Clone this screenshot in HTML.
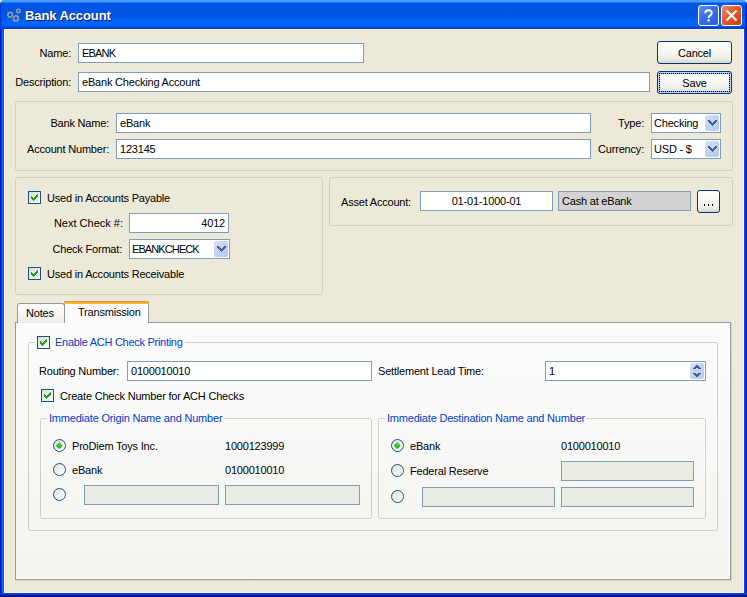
<!DOCTYPE html>
<html><head><meta charset="utf-8">
<style>
*{box-sizing:border-box;margin:0;padding:0}
html,body{width:747px;height:597px;overflow:hidden;background:#dfe5ef}
body{position:relative;font-family:"Liberation Sans",sans-serif;font-size:11px;color:#000}
.a{position:absolute}
.t{position:absolute;white-space:nowrap;line-height:13px;letter-spacing:-0.2px}
.r{text-align:right}
.win{position:absolute;left:0;top:0;width:747px;height:597px;border-radius:5px 5px 0 0;overflow:hidden;
 background:linear-gradient(to right,#0019cf 0,#0019cf 1px,#0831d9 1px,#0831d9 2px,#166aee 2px,#166aee 3px,#0855dd 3px,#0855dd 4px,transparent 4px,transparent 744px,#0041f0 744px,#0041f0 745px,#0036d4 745px,#0036d4 746px,#00209e 746px)}
.title{position:absolute;left:0;top:0;width:747px;height:29px;
 background:linear-gradient(to bottom,#4a9bff 0,#4a9bff 2px,#1a78fa 2px,#1a78fa 3px,#0059e8 3px,#0054e3 8px,#0056e8 17px,#0063f8 20px,#0066ff 24px,#0058f0 26px,#0050e4 27px,#003cc4 28px,#003cc4 29px)}
.client{position:absolute;left:4px;top:29px;width:740px;height:564px;background:#ece9d8;border:1px solid #fff5dc}
.bottom{position:absolute;left:0;top:593px;width:747px;height:4px;background:linear-gradient(to bottom,#0040f0 0,#0040f0 1px,#0030d0 1px,#0030d0 2px,#001a98 2px,#00138a 4px)}
.in{position:absolute;background:#fff;border:1px solid #7f9db9}
.in .t{left:3px;top:3px}
.dis{background:#ebebe4}
.ro{background:#d3d3d3}
.btn{position:absolute;border:1px solid #003c74;border-radius:3px;
 background:linear-gradient(to bottom,#fff 0%,#f7f7f4 40%,#f0f0ea 75%,#e3e2da 90%,#d6d0c5 100%)}
.btn .t{left:0;right:0;text-align:center;top:5px!important}
.grp{position:absolute;border:1px solid #d0d0bf;border-radius:2.5px}
.cmb{position:absolute;background:#fff;border:1px solid #7f9db9}
.cmb .t{left:2px;top:3px}
.dd{position:absolute;right:1px;top:1px;width:14px;height:16px;border-radius:2px;
 background:linear-gradient(135deg,#d8e3fc 0%,#c4d3f8 40%,#b4c8f8 100%)}
.dd svg{position:absolute;left:3px;top:5px}
.cb{position:absolute;width:13px;height:13px;border:1px solid #1c5180;background:linear-gradient(135deg,#dcdcd7 0%,#f0f0ec 60%,#fff 100%)}
.cb svg{position:absolute;left:2px;top:2px}
.rb{position:absolute;width:13px;height:13px;border-radius:50%;border:1px solid #1c5180;background:linear-gradient(135deg,#dcdcd7 0%,#f2f2ee 55%,#fff 100%)}
.rb .dot{position:absolute;left:3px;top:3px;width:4.6px;height:4.6px;border-radius:1px;transform:rotate(45deg);background:radial-gradient(circle at 40% 35%,#55d850 0,#2db82b 50%,#1f9e1e 100%)}
.blue{color:#0040d0}
</style></head><body>
<div class="win">
 <div class="title"></div>
 <div class="client"></div>
 <div class="bottom"></div>
 <div class="a" style="left:0;top:4px;width:2px;height:25px;background:linear-gradient(to right,#0a3cd8 0,#0a3cd8 1px,#0848e4 1px)"></div>
 <div class="a" style="left:744px;top:3px;width:3px;height:26px;background:linear-gradient(to right,#0050f8 0,#0050f8 1px,#0038d0 1px,#0038d0 2px,#0020a0 2px)"></div>
</div>

<!-- title icon -->
<svg class="a" style="left:4px;top:5px" width="20" height="20" viewBox="0 0 20 20">
 <g fill="none">
  <circle cx="6.2" cy="9.7" r="2.3" stroke="#7f9cc2" stroke-width="2.2"/>
  <circle cx="14.4" cy="5.9" r="1.8" stroke="#7f9cc2" stroke-width="1.9"/>
  <circle cx="11.9" cy="13.4" r="2.5" stroke="#7f9cc2" stroke-width="2.4"/>
  <circle cx="6.2" cy="9.7" r="3.6" stroke="#1f3f8f" stroke-width="0.9" stroke-dasharray="1.4 1.4"/>
  <circle cx="14.4" cy="5.9" r="2.9" stroke="#1f3f8f" stroke-width="0.9" stroke-dasharray="1.4 1.4"/>
  <circle cx="11.9" cy="13.4" r="3.9" stroke="#1f3f8f" stroke-width="0.9" stroke-dasharray="1.4 1.4"/>
  <circle cx="6.2" cy="9.7" r="1.1" stroke="#2a3f90" stroke-width="0.6"/>
  <circle cx="11.9" cy="13.4" r="1.2" stroke="#2a3f90" stroke-width="0.6"/>
 </g>
</svg>
<div class="t" style="left:26px;top:9px;font-weight:bold;font-size:13px;line-height:16px;color:#0a1870;letter-spacing:-0.1px">Bank Account</div>
<div class="t" style="left:25px;top:8px;font-weight:bold;font-size:13px;line-height:16px;color:#fff;letter-spacing:-0.1px">Bank Account</div>

<!-- help button -->
<div class="a" style="left:698px;top:5px;width:21px;height:21px;border:1px solid #fff;border-radius:3px;background:linear-gradient(135deg,#5f95f6 0%,#3a70ee 40%,#2a5de0 100%)">
 <svg class="a" style="left:0;top:0" width="19" height="19" viewBox="0 0 19 19"><path d="M6.3 7.2 Q6.3 4.3 9.5 4.3 Q12.7 4.3 12.7 7 Q12.7 8.6 11 9.6 Q9.6 10.4 9.6 12" fill="none" stroke="#fff" stroke-width="2"/><rect x="8.5" y="13.3" width="2.2" height="2.2" fill="#fff"/></svg>
</div>
<!-- close button -->
<div class="a" style="left:721px;top:5px;width:21px;height:21px;border:1px solid #fff;border-radius:3px;background:linear-gradient(135deg,#f08a66 0%,#e4582c 45%,#c8400e 100%)">
 <svg class="a" style="left:0;top:0" width="19" height="19" viewBox="0 0 19 19"><path d="M4.5 4.5 L14.5 14.5 M14.5 4.5 L4.5 14.5" stroke="#fff" stroke-width="2.1"/></svg>
</div>

<!-- top row -->
<div class="t r" style="left:0;width:71px;top:47px">Name:</div>
<div class="in" style="left:78px;top:43px;width:286px;height:20px"><div class="t" style="letter-spacing:-0.8px">EBANK</div></div>
<div class="t r" style="left:0;width:71px;top:76px">Description:</div>
<div class="in" style="left:78px;top:72px;width:572px;height:20px"><div class="t">eBank Checking Account</div></div>
<div class="btn" style="left:657px;top:41px;width:75px;height:23px"><div class="t" style="top:4px">Cancel</div></div>
<div class="btn" style="left:657px;top:71px;width:75px;height:23px;box-shadow:inset 0 0 0 1px #c0d2f8, inset 0 0 0 2px #8fb0f0">
 <div class="a" style="left:1px;top:1px;right:1px;bottom:1px;border:1px dotted #000"></div>
 <div class="t" style="top:4px">Save</div></div>

<!-- group 1 -->
<div class="grp" style="left:15px;top:101px;width:718px;height:70px"></div>
<div class="t r" style="left:0;width:109px;top:117px">Bank Name:</div>
<div class="in" style="left:116px;top:113px;width:475px;height:20px"><div class="t">eBank</div></div>
<div class="t r" style="left:0;width:109px;top:143px">Account Number:</div>
<div class="in" style="left:116px;top:139px;width:475px;height:20px"><div class="t">123145</div></div>
<div class="t r" style="left:500px;width:144px;top:117px">Type:</div>
<div class="cmb" style="left:651px;top:113px;width:70px;height:20px"><div class="t">Checking</div><div class="dd"><svg width="9" height="6" viewBox="0 0 9 6" shape-rendering="crispEdges" fill="#4d6185"><path d="M0 0h2v1h-2zM7 0h2v1h-2zM0 1h3v1h-3zM6 1h3v1h-3zM1 2h3v1h-3zM5 2h3v1h-3zM2 3h5v1h-5zM3 4h3v1h-3zM4 5h1v1h-1z"/></svg></div></div>
<div class="t r" style="left:500px;width:144px;top:143px">Currency:</div>
<div class="cmb" style="left:651px;top:139px;width:70px;height:20px"><div class="t">USD - $</div><div class="dd"><svg width="9" height="6" viewBox="0 0 9 6" shape-rendering="crispEdges" fill="#4d6185"><path d="M0 0h2v1h-2zM7 0h2v1h-2zM0 1h3v1h-3zM6 1h3v1h-3zM1 2h3v1h-3zM5 2h3v1h-3zM2 3h5v1h-5zM3 4h3v1h-3zM4 5h1v1h-1z"/></svg></div></div>

<!-- group 2 -->
<div class="grp" style="left:15px;top:177px;width:308px;height:118px"></div>
<div class="cb" style="left:28px;top:191px"><svg width="7" height="7" viewBox="0 0 7 7" shape-rendering="crispEdges" fill="#21a121"><path d="M6 0h1v1h-1zM5 1h2v1h-2zM0 2h1v1h-1zM4 2h3v1h-3zM0 3h2v1h-2zM3 3h3v1h-3zM0 4h5v1h-5zM1 5h3v1h-3zM2 6h1v1h-1z"/></svg></div>
<div class="t" style="left:47px;top:192px">Used in Accounts Payable</div>
<div class="t r" style="left:0;width:123px;top:217px;letter-spacing:0">Next Check #:</div>
<div class="in" style="left:129px;top:213px;width:100px;height:20px"><div class="t" style="left:auto;right:3px">4012</div></div>
<div class="t r" style="left:0;width:122px;top:243px">Check Format:</div>
<div class="cmb" style="left:129px;top:239px;width:101px;height:20px"><div class="t" style="letter-spacing:-0.9px">EBANKCHECK</div><div class="dd"><svg width="9" height="6" viewBox="0 0 9 6" shape-rendering="crispEdges" fill="#4d6185"><path d="M0 0h2v1h-2zM7 0h2v1h-2zM0 1h3v1h-3zM6 1h3v1h-3zM1 2h3v1h-3zM5 2h3v1h-3zM2 3h5v1h-5zM3 4h3v1h-3zM4 5h1v1h-1z"/></svg></div></div>
<div class="cb" style="left:28px;top:267px"><svg width="7" height="7" viewBox="0 0 7 7" shape-rendering="crispEdges" fill="#21a121"><path d="M6 0h1v1h-1zM5 1h2v1h-2zM0 2h1v1h-1zM4 2h3v1h-3zM0 3h2v1h-2zM3 3h3v1h-3zM0 4h5v1h-5zM1 5h3v1h-3zM2 6h1v1h-1z"/></svg></div>
<div class="t" style="left:47px;top:268px">Used in Accounts Receivable</div>

<!-- group 3 -->
<div class="grp" style="left:329px;top:177px;width:404px;height:49px"></div>
<div class="t" style="left:341px;top:196px">Asset Account:</div>
<div class="in" style="left:420px;top:191px;width:133px;height:20px"><div class="t" style="left:0;right:0;text-align:center">01-01-1000-01</div></div>
<div class="in ro" style="left:558px;top:191px;width:133px;height:20px"><div class="t">Cash at eBank</div></div>
<div class="btn" style="left:697px;top:190px;width:23px;height:23px"><div class="a" style="left:6px;top:13px;width:1px;height:2px;background:#000"></div><div class="a" style="left:10px;top:13px;width:1px;height:2px;background:#000"></div><div class="a" style="left:14px;top:13px;width:1px;height:2px;background:#000"></div></div>

<!-- tabs -->
<div class="a" style="left:15px;top:322px;width:716px;height:258px;border:1px solid #919b9c;background:linear-gradient(to bottom,#fcfcfe 0%,#f4f3ee 100%);box-shadow:1px 1px 0 #d8d5c6, inset -1px -1px 0 #fff"></div>
<div class="a" style="left:17px;top:303px;width:48px;height:20px;border:1px solid #919b9c;border-bottom:none;border-radius:3px 3px 0 0;background:linear-gradient(to bottom,#fff 0%,#f8f8f6 40%,#ecebe5 100%)"></div>
<div class="t" style="left:26px;top:307px">Notes</div>
<div class="a" style="left:64px;top:301px;width:85px;height:22px;border-left:1px solid #919b9c;border-right:1px solid #919b9c;background:#fcfcfe"></div>
<div class="a" style="left:64px;top:301px;width:85px;height:3px;border-radius:3px 3px 0 0;background:linear-gradient(to bottom,#e68b2c 0,#ffc73c 100%)"></div>
<div class="t" style="left:78px;top:306px">Transmission</div>

<!-- tab content -->
<div class="grp" style="left:28px;top:342px;width:690px;height:189px"></div>
<div class="a" style="left:35px;top:336px;width:150px;height:13px;background:#fbfbfc"></div>
<div class="cb" style="left:37px;top:336px"><svg width="7" height="7" viewBox="0 0 7 7" shape-rendering="crispEdges" fill="#21a121"><path d="M6 0h1v1h-1zM5 1h2v1h-2zM0 2h1v1h-1zM4 2h3v1h-3zM0 3h2v1h-2zM3 3h3v1h-3zM0 4h5v1h-5zM1 5h3v1h-3zM2 6h1v1h-1z"/></svg></div>
<div class="t blue" style="left:55px;top:336px;letter-spacing:-0.28px">Enable ACH Check Printing</div>

<div class="t" style="left:39px;top:365px">Routing Number:</div>
<div class="in" style="left:127px;top:361px;width:245px;height:20px"><div class="t">0100010010</div></div>
<div class="t" style="left:378px;top:365px">Settlement Lead Time:</div>
<div class="in" style="left:545px;top:361px;width:161px;height:20px"><div class="t">1</div>
 <div class="a" style="left:144px;top:1px;width:14px;height:16px;border-radius:2px;background:linear-gradient(135deg,#d8e3fc 0%,#c4d3f8 40%,#b4c8f8 100%)">
  <svg class="a" style="left:0;top:0" width="14" height="16" viewBox="0 0 14 16" shape-rendering="crispEdges" fill="#4d6185"><path d="M6 2h2v1h-2zM5 3h4v1h-4zM4 4h6v1h-6zM3 5h3v1h-3zM8 5h3v1h-3zM3 10h3v1h-3zM8 10h3v1h-3zM4 11h6v1h-6zM5 12h4v1h-4zM6 13h2v1h-2z"/></svg>
 </div>
</div>
<div class="cb" style="left:41px;top:389px"><svg width="7" height="7" viewBox="0 0 7 7" shape-rendering="crispEdges" fill="#21a121"><path d="M6 0h1v1h-1zM5 1h2v1h-2zM0 2h1v1h-1zM4 2h3v1h-3zM0 3h2v1h-2zM3 3h3v1h-3zM0 4h5v1h-5zM1 5h3v1h-3zM2 6h1v1h-1z"/></svg></div>
<div class="t" style="left:60px;top:390px">Create Check Number for ACH Checks</div>

<!-- origin group -->
<div class="grp" style="left:40px;top:418px;width:332px;height:101px"></div>
<div class="t blue" style="left:47px;top:412px;padding:0 2px;background:#f9f9f8">Immediate Origin Name and Number</div>
<div class="rb" style="left:53px;top:439px"><div class="dot"></div></div>
<div class="t" style="left:72px;top:440px">ProDiem Toys Inc.</div>
<div class="t" style="left:225px;top:440px">1000123999</div>
<div class="rb" style="left:53px;top:463px"></div>
<div class="t" style="left:72px;top:464px">eBank</div>
<div class="t" style="left:225px;top:464px">0100010010</div>
<div class="rb" style="left:53px;top:488px"></div>
<div class="in dis" style="left:84px;top:485px;width:135px;height:20px"></div>
<div class="in dis" style="left:225px;top:485px;width:135px;height:20px"></div>

<!-- destination group -->
<div class="grp" style="left:378px;top:418px;width:328px;height:101px"></div>
<div class="t blue" style="left:385px;top:412px;padding:0 2px;background:#f9f9f8">Immediate Destination Name and Number</div>
<div class="rb" style="left:391px;top:439px"><div class="dot"></div></div>
<div class="t" style="left:410px;top:440px">eBank</div>
<div class="t" style="left:561px;top:440px">0100010010</div>
<div class="rb" style="left:391px;top:464px"></div>
<div class="t" style="left:410px;top:465px">Federal Reserve</div>
<div class="in dis" style="left:561px;top:461px;width:133px;height:20px"></div>
<div class="rb" style="left:391px;top:490px"></div>
<div class="in dis" style="left:422px;top:487px;width:133px;height:20px"></div>
<div class="in dis" style="left:561px;top:487px;width:133px;height:20px"></div>

</body></html>
